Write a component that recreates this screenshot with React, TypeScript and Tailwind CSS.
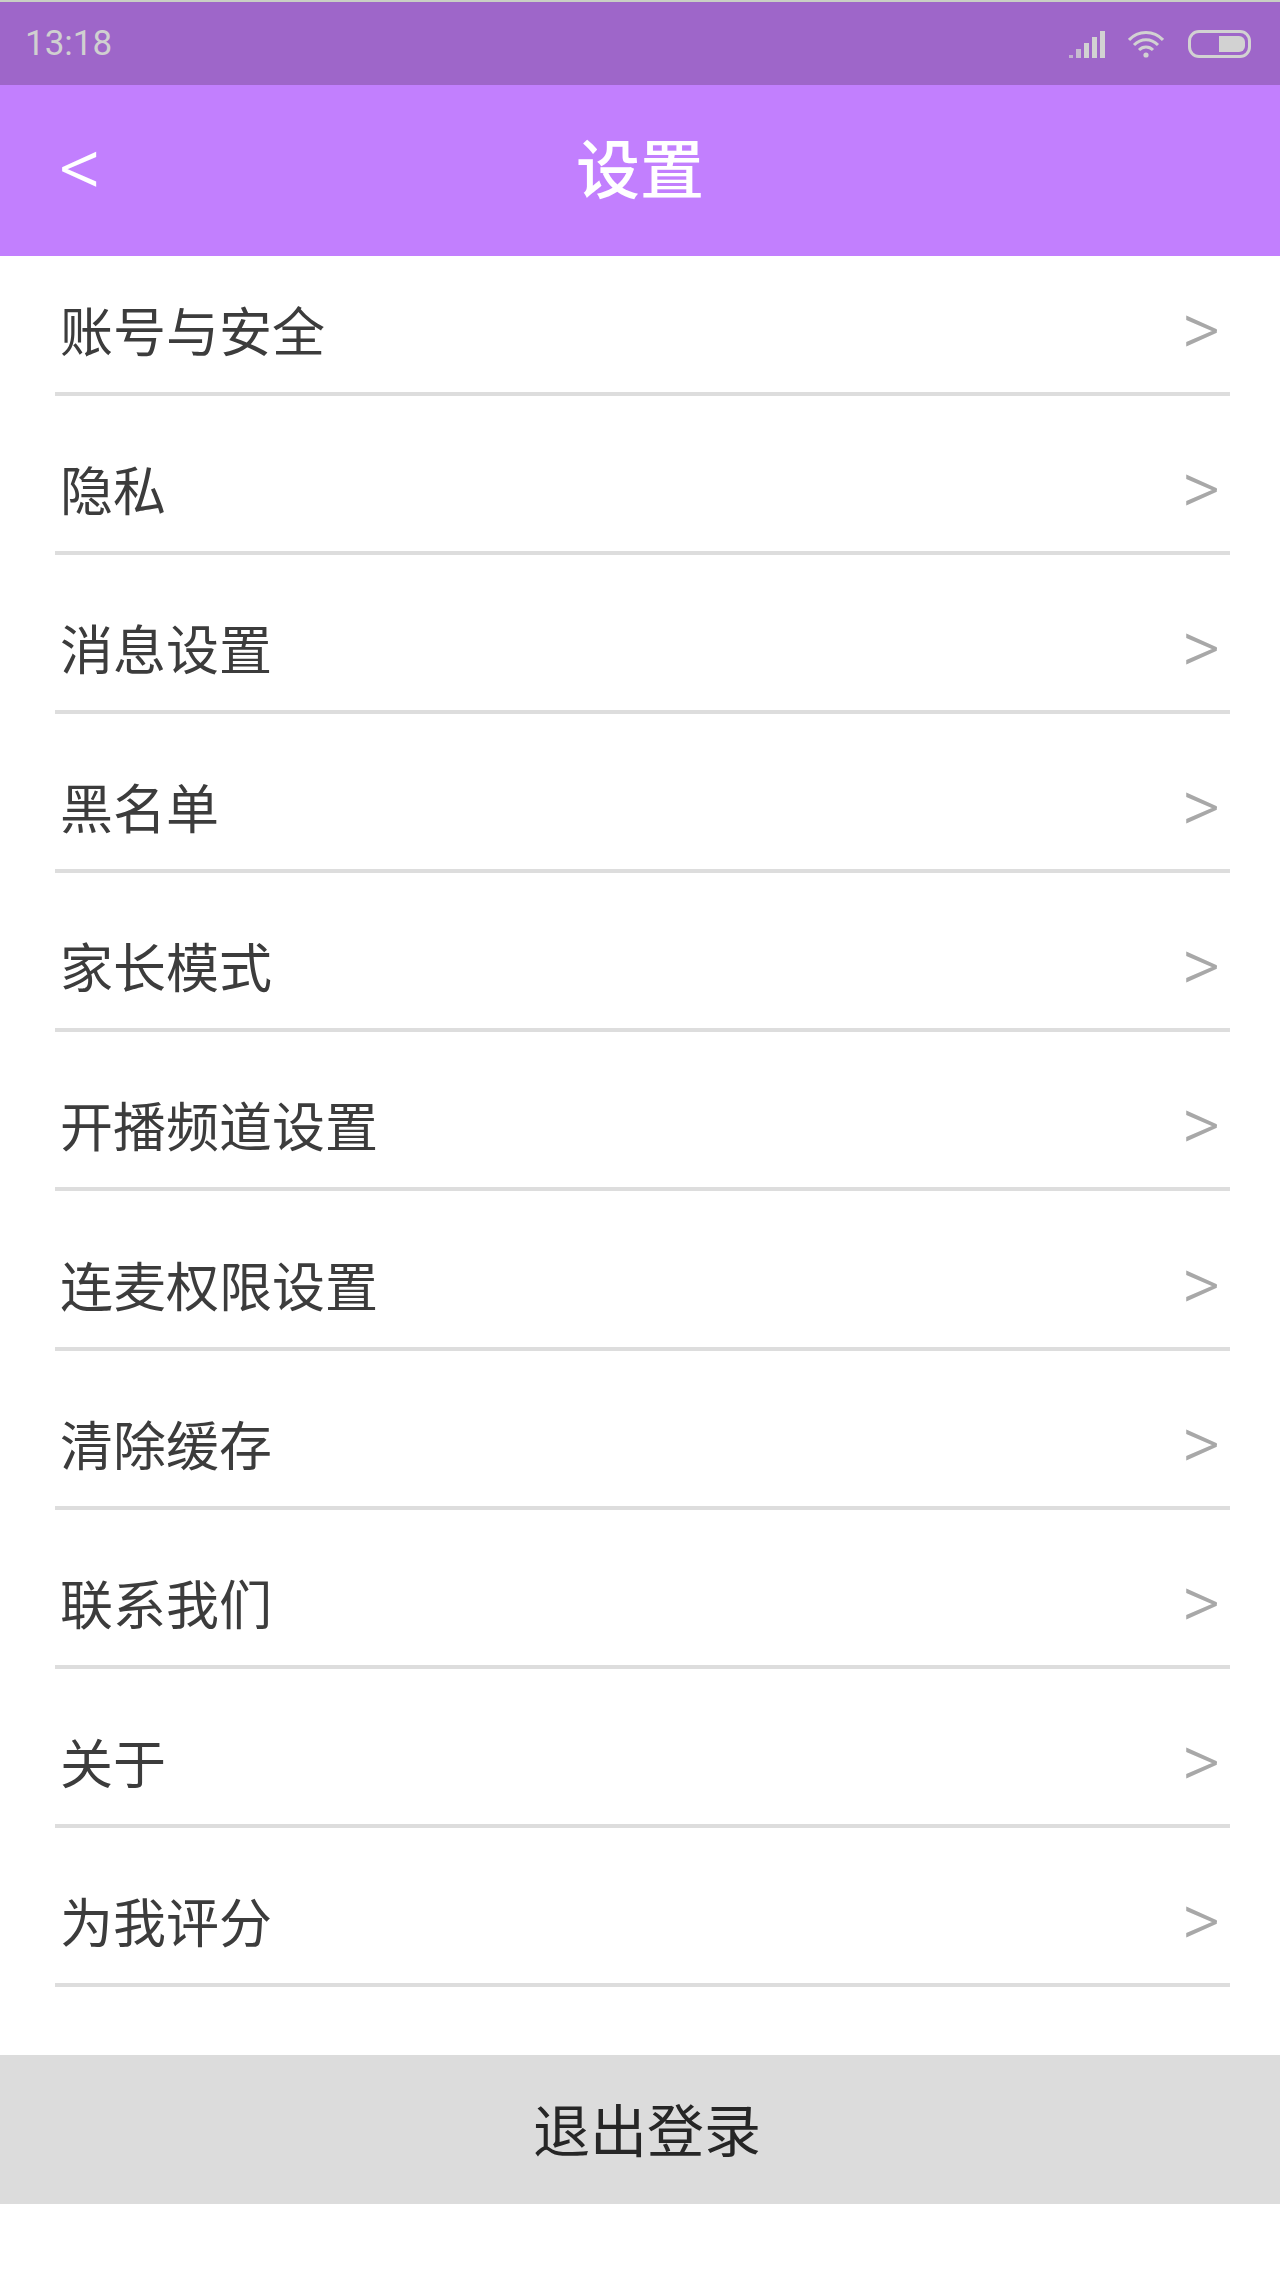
import React from 'react'

const items = [
  '账号与安全',
  '隐私',
  '消息设置',
  '黑名单',
  '家长模式',
  '开播频道设置',
  '连麦权限设置',
  '清除缓存',
  '联系我们',
  '关于',
  '为我评分',
]

const cjk = "font-['Roboto','Noto_Sans_CJK_SC',sans-serif]"

const StatusIcons: React.FC = () => (
  <div className="flex items-center">
    <svg width="38" height="30" viewBox="0 0 38 30" fill="#d2d2d2" className="mr-[22px]">
      <rect x="1" y="26" width="4" height="3" opacity="0.7" />
      <rect x="8" y="20" width="5" height="9" opacity="0.8" />
      <rect x="16" y="14" width="5" height="15" />
      <rect x="24" y="8" width="5" height="21" />
      <rect x="32" y="2" width="5" height="27" />
    </svg>
    <svg width="36" height="30" viewBox="0 0 36 30" fill="none" stroke="#d2d2d2" strokeWidth="3" className="mr-[24px]">
      <path d="M1 11 C10 1 26 1 35 11" />
      <path d="M6 16 C13 9 23 9 30 16" />
      <path d="M11 21 C15 17 21 17 25 21" />
      <circle cx="18" cy="26" r="2.6" fill="#d2d2d2" stroke="none" />
    </svg>
    <div className="relative w-[63px] h-[28px] rounded-[11px] border-[3px] border-[#d2d2d2]">
      <div className="absolute right-[3px] top-[3px] w-[26px] h-[16px] rounded-r-[6px] bg-[#d2d2d2]" />
    </div>
  </div>
)

export default function App() {
  return (
    <div className={`w-[1280px] h-[2275px] bg-white flex flex-col ${cjk}`}>
      <div className="h-[85px] shrink-0 bg-[#9e66c9] border-t-[2px] border-[#c9cfc4] flex items-center justify-between pl-[25px] pr-[29px]">
        <span className="text-[35px] leading-none text-[#d0d0d0]">13:18</span>
        <StatusIcons />
      </div>

      <div className="h-[171px] shrink-0 bg-[#c27ffe] relative flex items-center justify-center">
        <span className="absolute left-[59px] top-[43px] text-[84px] leading-[80px] font-[350] text-white">&lt;</span>
        <span className="text-[64px] leading-none font-medium text-white mt-[2px]">设置</span>
      </div>

      <div className="flex flex-col pl-[55px] pr-[50px]">
        {items.map((label, i) => (
          <div
            key={label}
            className={`flex items-end justify-between pl-[5px] pr-[10px] border-b-[4px] border-[#dddddd] ${i === 0 ? 'h-[140px]' : 'h-[159.1px]'}`}
          >
            <span className="text-[53px] leading-none text-[#3c3c3c] mb-[31px]">{label}</span>
            <span className="text-[74px] leading-none font-[350] text-[#a8a8a8] mb-[25px]">&gt;</span>
          </div>
        ))}
      </div>

      <div className="mt-[68px] h-[149px] shrink-0 bg-[#dcdcdc] flex items-center justify-center pl-[14px]">
        <span className="text-[57px] leading-none text-[#262626] mt-[6px]">退出登录</span>
      </div>
    </div>
  )
}
